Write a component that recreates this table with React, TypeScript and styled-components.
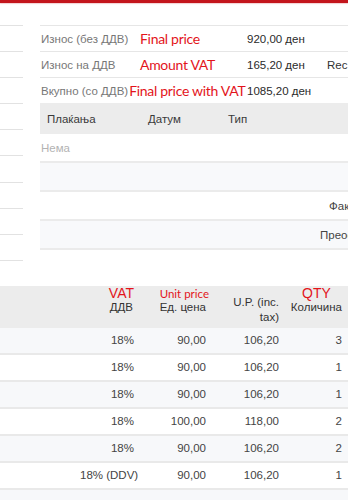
import React from "react";
import styled, { createGlobalStyle } from "styled-components";

const GlobalStyle = createGlobalStyle`
  html, body {
    margin: 0;
    padding: 0;
    background: #fff;
  }
  body {
    font-family: "Liberation Sans", Arial, sans-serif;
    font-size: 11.5px;
    color: #444;
  }
`;

const Page = styled.div`
  width: 348px;
  height: 500px;
  overflow: hidden;
  background: #fff;
`;

const TopLine = styled.div`
  height: 3px;
  background: #c3151c;
  box-shadow: 0 1px 1px rgba(195, 21, 28, 0.2);
`;

const Upper = styled.div`
  display: grid;
  grid-template-columns: 23px 420px;
  column-gap: 17px;
  align-items: start;
  padding-top: 22px;
`;

const SideList = styled.div`
  display: flex;
  flex-direction: column;
`;

const SideItem = styled.div`
  height: 26.1px;
  box-sizing: border-box;
  border-top: 1px solid #e2e2e2;
`;

const Panel = styled.div`
  display: flex;
  flex-direction: column;
`;

const SummaryRow = styled.div`
  display: flex;
  align-items: center;
  height: 26px;
  box-sizing: border-box;
  border-top: 1px solid #e6e6e6;
  padding-left: 1px;
`;

const LabelCell = styled.div`
  display: flex;
  align-items: center;
  width: 206px;
  white-space: nowrap;
`;

const Label = styled.span<{ $tight?: boolean }>`
  color: #777;
  width: ${(p) => (p.$tight ? "auto" : "99px")};
  margin-right: ${(p) => (p.$tight ? "1px" : "0")};
`;

const Note = styled.span`
  font-family: Lato, "Open Sans", sans-serif;
  font-size: 14px;
  letter-spacing: -0.3px;
  color: #e3141b;
`;

const Value = styled.span`
  width: 80px;
  color: #2a2a2a;
  white-space: nowrap;
`;

const Extra = styled.span`
  color: #333;
  white-space: nowrap;
`;

const PayHeader = styled.div`
  display: grid;
  grid-template-columns: 101px 80px 1fr;
  align-items: center;
  height: 31px;
  padding-left: 7px;
  background: #ececec;
  color: #3a3a3a;
`;

const PayRow = styled.div<{ $striped?: boolean; $indent?: number }>`
  display: flex;
  align-items: center;
  height: 29px;
  box-sizing: border-box;
  border-bottom: 2px solid #ebebeb;
  background: ${(p) => (p.$striped ? "#f8f9fb" : "#fff")};
  padding-left: ${(p) => p.$indent ?? 1}px;
  white-space: nowrap;
`;

const Muted = styled.span`
  color: #b3b3b3;
`;

const Items = styled.div`
  display: flex;
  flex-direction: column;
`;

const ItemsGrid = styled.div`
  display: grid;
  grid-template-columns: 1fr 60px 72px 73px 63px;
`;

const HeadRow = styled(ItemsGrid)`
  height: 42px;
  background: #ececec;
  color: #333;
`;

const HeadCell = styled.div<{ $pb?: number }>`
  display: flex;
  flex-direction: column;
  justify-content: flex-end;
  align-items: flex-end;
  padding: 0 6px ${(p) => p.$pb ?? 14}px 0;
  text-align: right;
  line-height: 15px;
`;

const Stack = styled.div<{ $align?: string }>`
  display: flex;
  flex-direction: column;
  align-items: ${(p) => p.$align ?? "center"};
`;

const BigNote = styled.span`
  font-size: 14px;
  line-height: 11px;
  color: #e3141b;
  margin-bottom: 1px;
`;

const SmallNote = styled.span`
  font-family: Lato, "Open Sans", sans-serif;
  font-size: 11.5px;
  line-height: 12px;
  color: #e3141b;
  margin-right: -6px;
`;

const ItemRow = styled(ItemsGrid)<{ $striped?: boolean }>`
  height: 27px;
  box-sizing: border-box;
  border-bottom: 2px solid #e9e9e9;
  background: ${(p) => (p.$striped ? "#f7f8fa" : "#fff")};
  align-items: center;
`;

const Num = styled.div`
  text-align: right;
  padding-right: 6px;
  white-space: nowrap;
`;

const summary = [
  { label: "Износ (без ДДВ)", note: "Final price", value: "920,00 ден", extra: "" },
  { label: "Износ на ДДВ", note: "Amount VAT", value: "165,20 ден", extra: "Rec" },
  { label: "Вкупно (со ДДВ)", note: "Final price with VAT", value: "1085,20 ден", extra: "", tight: true },
];

const items = [
  { vat: "18%", price: "90,00", gross: "106,20", qty: "3" },
  { vat: "18%", price: "90,00", gross: "106,20", qty: "1" },
  { vat: "18%", price: "90,00", gross: "106,20", qty: "1" },
  { vat: "18%", price: "100,00", gross: "118,00", qty: "2" },
  { vat: "18%", price: "90,00", gross: "106,20", qty: "2" },
  { vat: "18% (DDV)", price: "90,00", gross: "106,20", qty: "1" },
  { vat: "", price: "", gross: "", qty: "" },
];

const App = () => {
  return (
    <Page>
      <GlobalStyle />
      <TopLine />
      <Upper>
        <SideList>
          {Array.from({ length: 10 }).map((_, i) => (
            <SideItem key={i} />
          ))}
        </SideList>
        <Panel>
          {summary.map((row) => (
            <SummaryRow key={row.label}>
              <LabelCell>
                <Label $tight={row.tight}>{row.label}</Label>
                <Note>{row.note}</Note>
              </LabelCell>
              <Value>{row.value}</Value>
              <Extra>{row.extra}</Extra>
            </SummaryRow>
          ))}
          <PayHeader>
            <span>Плаќања</span>
            <span>Датум</span>
            <span>Тип</span>
          </PayHeader>
          <PayRow>
            <Muted>Нема</Muted>
          </PayRow>
          <PayRow $striped />
          <PayRow $indent={289}>Фактурирано</PayRow>
          <PayRow $striped $indent={280}>
            Преостанато
          </PayRow>
        </Panel>
      </Upper>
      <Items>
        <HeadRow>
          <HeadCell />
          <HeadCell $pb={13}>
            <Stack>
              <BigNote>VAT</BigNote>
              <span>ДДВ</span>
            </Stack>
          </HeadCell>
          <HeadCell $pb={13}>
            <Stack $align="flex-start">
              <SmallNote>Unit price</SmallNote>
              <span>Ед. цена</span>
            </Stack>
          </HeadCell>
          <HeadCell $pb={3}>U.P. (inc. tax)</HeadCell>
          <HeadCell $pb={13}>
            <Stack>
              <BigNote>QTY</BigNote>
              <span>Количина</span>
            </Stack>
          </HeadCell>
        </HeadRow>
        {items.map((it, i) => (
          <ItemRow key={i} $striped={i % 2 === 0}>
            <div />
            <Num>{it.vat}</Num>
            <Num>{it.price}</Num>
            <Num>{it.gross}</Num>
            <Num>{it.qty}</Num>
          </ItemRow>
        ))}
      </Items>
    </Page>
  );
};

export default App;
